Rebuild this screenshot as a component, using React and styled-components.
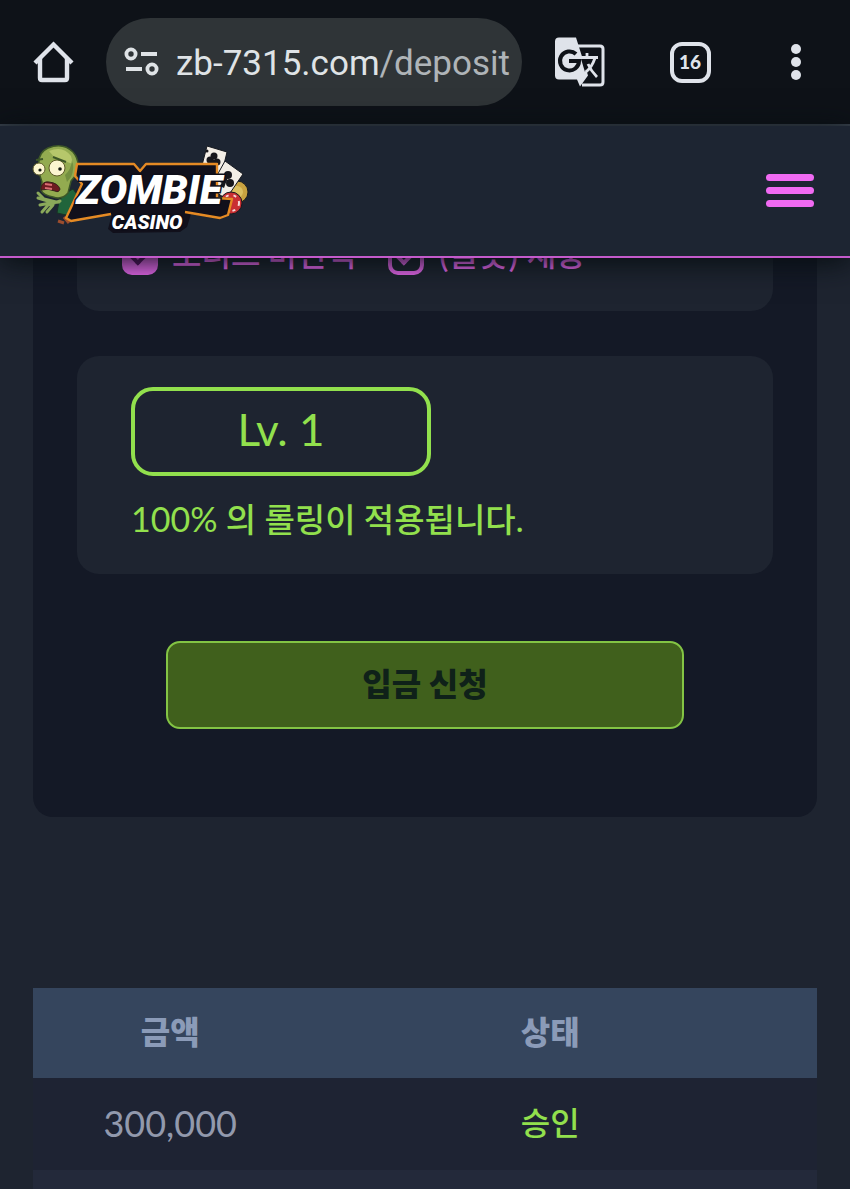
import React from 'react';
import styled, { createGlobalStyle } from 'styled-components';

const GlobalStyle = createGlobalStyle`
  :root {
    --colors__bg: #1e2430;
    --colors__bg_dark: #141926;
    --colors__bg_bar: #0e1218;
    --colors__header: #1d2532;
    --colors__pink: #f06af2;
    --colors__green: #92e04d;
    --colors__text: #9299ad;
  }
  * {
    box-sizing: border-box;
  }
  html, body, #root {
    height: 100%;
    margin: 0;
  }
  body {
    background: var(--colors__bg);
    font-family: Lato, 'Noto Sans CJK KR', sans-serif;
    overflow: hidden;
  }
  button {
    font-family: inherit;
    margin: 0;
    padding: 0;
    background: none;
    border: 0;
    cursor: pointer;
  }
`;

const Screen = styled.div`
  display: flex;
  flex-direction: column;
  height: 100%;
`;

const BrowserBar = styled.div`
  display: flex;
  align-items: center;
  height: 126px;
  flex-shrink: 0;
  padding: 0 32px;
  background: var(--colors__bg_bar);
  border-bottom: 2px solid #39424d;
`;

const IconButton = styled.button`
  display: flex;
  align-items: center;
  justify-content: center;
  width: ${({ $width }) => $width}px;
  height: 52px;
  color: #dfe3ea;
  & > svg {
    display: block;
  }
`;

const Address = styled.div`
  display: flex;
  align-items: center;
  gap: 16px;
  flex: 1;
  min-width: 0;
  height: 88px;
  margin-left: 30px;
  padding: 0 12px 0 18px;
  border-radius: 44px;
  background: #2f3437;
  color: #dfe3e6;
  & > svg {
    flex-shrink: 0;
  }
`;

const Url = styled.div`
  flex: 1;
  overflow: hidden;
  padding-top: 4px;
  white-space: nowrap;
  font-family: Roboto, sans-serif;
  font-size: 35px;
  line-height: 48px;
  & > span {
    color: #afb4b8;
  }
`;

const Actions = styled.div`
  display: flex;
  align-items: center;
  justify-content: space-between;
  width: 264px;
  margin-left: 32px;
`;

const Header = styled.header`
  display: flex;
  align-items: center;
  justify-content: space-between;
  flex-shrink: 0;
  height: 132px;
  padding: 0 36px 0 28px;
  background: var(--colors__header);
  border-bottom: 2px solid #c45acb;
  box-shadow: 0 4px 28px #060d10;
  z-index: 1;
`;

const Burger = styled.button`
  display: flex;
  flex-direction: column;
  gap: 6px;
  width: 48px;
  padding-bottom: 2px;
  & > span {
    height: 7px;
    border-radius: 4px;
    background: var(--colors__pink);
  }
`;

const Content = styled.main`
  flex: 1;
  min-height: 0;
  overflow: hidden;
  padding: 0 33px;
`;

/* scrolled down, the upper part sits behind the header */
const Panel = styled.form`
  display: flex;
  flex-direction: column;
  margin-top: -73px;
  padding: 0 44px 88px;
  border-radius: 20px;
  background: var(--colors__bg_dark);
`;

const Card = styled.section`
  margin-bottom: 45px;
  padding: ${({ $padding }) => $padding};
  border-radius: 22px;
  background: var(--colors__bg);
`;

const Options = styled.div`
  display: flex;
  gap: 32px;
`;

const Option = styled.label`
  display: flex;
  align-items: flex-end;
  gap: 14px;
  height: 36px;
  color: #f26cf8;
  font-size: 32px;
  font-weight: 500;
  line-height: 46px;
  font-family: 'Noto Sans CJK KR', sans-serif;
`;

const Check = styled.input`
  appearance: none;
  display: grid;
  place-items: center;
  width: 36px;
  height: 36px;
  margin: 0;
  border: 4px solid #e868ee;
  border-radius: 10px;
  &:checked {
    background: #e868ee;
  }
  &::before {
    content: '';
    width: 14px;
    height: 8px;
    margin-bottom: 4px;
    border: solid #e868ee;
    border-width: 0 0 4px 4px;
    transform: rotate(-45deg);
  }
  &:checked::before {
    border-color: #5b1467;
  }
`;

const Level = styled.div`
  width: 51%;
  height: 89px;
  border: 4px solid var(--colors__green);
  border-radius: 22px;
  color: var(--colors__green);
  font-size: 44px;
  line-height: 76px;
  text-align: center;
`;

const Rolling = styled.p`
  margin: 19px 0 0;
  color: var(--colors__green);
  font-size: 33px;
  font-weight: 500;
  line-height: 48px;
  & > span {
    font-size: 34px;
    font-weight: 400;
  }
`;

const Submit = styled.button`
  align-self: center;
  width: 518px;
  max-width: 100%;
  height: 88px;
  margin-top: 22px;
  padding-bottom: 6px;
  border: 2px solid #83c444;
  border-radius: 14px;
  background: #40601c;
  color: #0f2119;
  font-size: 32px;
  font-weight: 900;
`;

const Table = styled.table`
  width: 100%;
  margin-top: 171px;
  border-collapse: collapse;
  table-layout: fixed;
  color: var(--colors__text);
  font-size: 32px;
  th,
  td {
    height: 92px;
    padding: 0 0 6px;
    text-align: center;
  }
  th {
    height: 90px;
    background: #35455d;
    color: #8b9bb8;
    font-weight: 900;
  }
  th:first-child {
    width: 35%;
  }
  th:last-child,
  td:last-child {
    padding-right: 24px;
  }
  tbody tr {
    background: #1e2333;
  }
  tbody tr:nth-child(even) {
    background: #23293a;
  }
`;

const Amount = styled.td`
  && {
    padding-bottom: 3px;
  }
  font-size: 36px;
`;

const Status = styled.td`
  color: var(--colors__green);
  font-weight: 500;
`;

const LogoText = styled.text`
  font-family: Roboto, sans-serif;
  font-weight: 900;
  font-style: italic;
  text-anchor: middle;
  fill: #fff;
  stroke: #0d0d18;
  stroke-width: 3px;
  paint-order: stroke;
`;

const HomeIcon = () => (
  <svg width="44" height="44" viewBox="0 0 44 44" fill="none" stroke="currentColor" strokeWidth="4.4" strokeLinejoin="round">
    <path d="M8 18v20q0 2 2 2h23q2 0 2-2V18" />
    <path d="M3 23 21.500 4.500 40 23" strokeLinejoin="miter" />
  </svg>
);

const SettingsIcon = () => (
  <svg width="36" height="30" viewBox="0 0 36 30" fill="none" stroke="currentColor" strokeWidth="3.8">
    <circle cx="7" cy="7" r="4.600" />
    <path d="M17 7h16M2 22h16" />
    <circle cx="28" cy="22" r="4.600" />
  </svg>
);

const TranslateIcon = () => (
  <svg width="52" height="52" viewBox="0 0 52 52" fill="none">
    <path d="M24 10h22q3 0 3 3v33q0 3-3 3H28" stroke="currentColor" strokeWidth="3" />
    <path d="M5 1.500h17l12 38-8 11-3-7H5q-4 0-4-4v-34q0-4 4-4z" fill="currentColor" />
    <path d="M22 18a9.500 9.500 0 1 0 3 7h-10" stroke="#0e1218" strokeWidth="4" />
    <path d="M27 23h9l-5 13z" fill="#0e1218" />
    <path d="M27 21.500h17M33 17v5M41 22q-3 9-9 14M34 28q3 7 9 13" stroke="currentColor" strokeWidth="2.800" />
  </svg>
);

const TabCount = styled.span`
  display: block;
  width: 41px;
  height: 41px;
  border: 4px solid #dfe3ea;
  border-radius: 12px;
  color: #dfe3ea;
  font-size: 19px;
  font-weight: 900;
  line-height: 32px;
`;

const DotsIcon = () => (
  <svg width="12" height="40" viewBox="0 0 12 40" fill="currentColor">
    <circle cx="6" cy="7" r="5" />
    <circle cx="6" cy="20" r="5" />
    <circle cx="6" cy="33" r="5" />
  </svg>
);

const Logo = () => (
  <svg width="224" height="98" viewBox="0 0 224 98" role="img" aria-label="Zombie Casino">
    {/* cards and chips */}
    <g stroke="#16191f" strokeWidth="1">
      <circle cx="209" cy="50" r="11" fill="#c9a340" />
      <circle cx="209" cy="50" r="6" fill="#dcc060" stroke="none" />
      <path d="m179 4 20 6-7 29-20-8z" fill="#f3eee6" />
      <path d="m197 19 18 13-17 25-16-11z" fill="#f3eee6" />
      <circle cx="203" cy="61" r="11" fill="#c92f33" />
    </g>
    <circle cx="203" cy="61" r="8" fill="none" stroke="#f6dcdc" strokeWidth="2" strokeDasharray="3 5" />
    <g fill="#17171c">
      <circle cx="186" cy="14" r="3.500" />
      <circle cx="182" cy="18" r="3.500" />
      <circle cx="189" cy="20" r="3.500" />
      <path d="m184 17 3 1-2 7-4-1z" />
      <circle cx="179" cy="9" r="1.500" />
      <circle cx="200" cy="33" r="4" />
      <circle cx="195" cy="37" r="4" />
      <circle cx="202" cy="41" r="4" />
      <path d="m197 34 3 1-4 11-4-2z" />
    </g>
    {/* zombie */}
    <path d="m36 52 9-5 6 8-8 19-14-3 2-12z" fill="#20643b" stroke="#183224" />
    <path d="M11 25Q9 11 20 6q15-6 25 4 8 9 3 23l-5 6-3 12q-6 7-15 4-10-2-12-7l1-8q-3-7-3-15z" fill="#93ab50" stroke="#3d5727" strokeWidth="1.500" />
    <path d="M21 9q14-6 22 5l2 8-9-3-9-3z" fill="#b6c76b" />
    <path d="M44 18q3 8-1 17l-4 5-2-7q6-5 7-15z" fill="#738f40" />
    <circle cx="11" cy="27" r="6" fill="#fbf5cf" stroke="#5e5c29" />
    <circle cx="29" cy="26" r="8" fill="#fbf5cf" stroke="#5e5c29" />
    <circle cx="12" cy="28" r="1.600" fill="#151a12" />
    <circle cx="32" cy="27" r="1.800" fill="#151a12" />
    <path d="m8 18 7-1M25 15l13 5" stroke="#3d5727" strokeWidth="2" />
    <path d="M13 45q2-6 8-5 9 1 11 7-1 4-5 2-7-3-14-1z" fill="#6d1a20" stroke="#34201a" />
    <path d="m17 42 7 1M17 46l7 1" stroke="#d96d72" strokeWidth="2" />
    <g fill="none" stroke="#8aa95a" strokeWidth="3" strokeLinecap="round">
      <path d="m10 51 6 6 12 3M10 56l10 3M12 63l10-2 9-1M14 70l6-7 12-4M19 70l6-7" />
    </g>
    <path d="m30 79 6 2M36 75l5 6" stroke="#9c4d2e" strokeWidth="3" />
    {/* plate */}
    <path
      d="M49 22h57l6 6 6-6h71v33l15 1-4 18-8 3-29-5-4 13-7 5-67 1-5-4 4-15-40 6-6-4 17-35-7-7z"
      fill="#11101b"
    />
    <path
      d="m83 72-40 7-5-3 16-34-7-8 2-12h57l6 7 6-7h71v34l15 1-4 16-8 3-35-6"
      fill="none"
      stroke="#e58a24"
      strokeWidth="2.400"
      strokeLinejoin="round"
    />
    <LogoText x="121" y="62" fontSize="41">ZOMBIE</LogoText>
    <LogoText x="119" y="87" fontSize="20">CASINO</LogoText>
  </svg>
);

const rows = [
  { id: 1, amount: '300,000', status: '승인' },
  { id: 2, amount: '', status: '' },
];

export default function App() {
  return (
    <>
      <GlobalStyle />
      <Screen>
        <BrowserBar>
          <IconButton $width={44} aria-label="Home">
            <HomeIcon />
          </IconButton>
          <Address>
            <SettingsIcon />
            <Url>
              zb-7315.com<span>/deposit</span>
            </Url>
          </Address>
          <Actions>
            <IconButton $width={52} aria-label="Translate">
              <TranslateIcon />
            </IconButton>
            <IconButton $width={44} aria-label="Tabs">
              <TabCount>16</TabCount>
            </IconButton>
            <IconButton $width={44} aria-label="More">
              <DotsIcon />
            </IconButton>
          </Actions>
        </BrowserBar>
        <Header>
          <Logo />
          <Burger type="button" aria-label="Menu">
            <span />
            <span />
            <span />
          </Burger>
        </Header>
        <Content>
          <Panel onSubmit={e => e.preventDefault()}>
            <Card $padding="54px 45px 36px">
              <Options>
                <Option>
                  <Check type="checkbox" defaultChecked />
                  <span>보너스 미선택</span>
                </Option>
                <Option>
                  <Check type="checkbox" />
                  <span>(슬롯) 재충</span>
                </Option>
              </Options>
            </Card>
            <Card $padding="31px 54px">
              <Level>Lv. 1</Level>
              <Rolling>
                <span>100%</span> 의 롤링이 적용됩니다.
              </Rolling>
            </Card>
            <Submit type="submit">입금 신청</Submit>
          </Panel>
          <Table>
            <thead>
              <tr>
                <th>금액</th>
                <th>상태</th>
              </tr>
            </thead>
            <tbody>
              {rows.map(({ id, amount, status }) => (
                <tr key={id}>
                  <Amount>{amount}</Amount>
                  <Status>{status}</Status>
                </tr>
              ))}
            </tbody>
          </Table>
        </Content>
      </Screen>
    </>
  );
}
